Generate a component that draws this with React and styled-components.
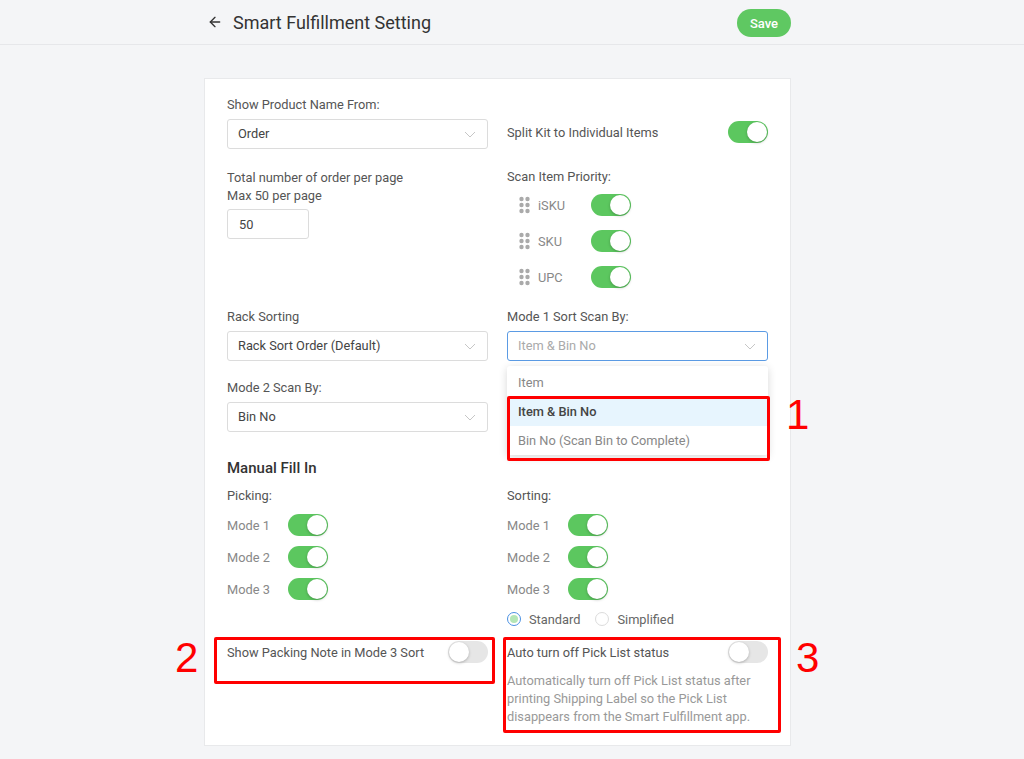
import React from 'react';
import styled, { createGlobalStyle } from 'styled-components';
import { ArrowLeft } from 'lucide-react';

const GlobalStyle = createGlobalStyle`
  html, body {
    margin: 0;
    padding: 0;
    background: #f4f5f7;
    font-family: Roboto, "Noto Sans", Arial, sans-serif;
    color: #555;
  }
  * { box-sizing: border-box; }
`;

const TEXT = '12.8px';

const Chevron = () => (
  <svg width="12" height="7" viewBox="0 0 12 7" fill="none">
    <path d="M1 1l5 5 5-5" stroke="#c6c6c6" strokeWidth="1" />
  </svg>
);

const Dots = () => (
  <svg width="11" height="18" viewBox="0 0 11 18">
    {[3, 9, 15].map(y => (
      <g key={y}>
        <circle cx="2.5" cy={y} r="2.2" fill="#aaa" />
        <circle cx="8.5" cy={y} r="2.2" fill="#aaa" />
      </g>
    ))}
  </svg>
);

function Select({ value, focused, children }) {
  return (
    <styles.SelectBox $focused={focused}>
      <styles.SelectValue $focused={focused}>{value}</styles.SelectValue>
      <Chevron />
      {children}
    </styles.SelectBox>
  );
}

function ModeList({ title }) {
  return (
    <div>
      <styles.Label>{title}</styles.Label>
      <styles.ToggleList>
        {['Mode 1', 'Mode 2', 'Mode 3'].map(m => (
          <styles.ModeRow key={m}>
            <styles.ModeLabel>{m}</styles.ModeLabel>
            <styles.Toggle $on />
          </styles.ModeRow>
        ))}
      </styles.ToggleList>
    </div>
  );
}

function App() {
  return (
    <>
      <GlobalStyle />
      <styles.Header>
        <styles.HeaderInner>
          <styles.TitleGroup>
            <ArrowLeft size={16} color="#333" strokeWidth={2} />
            <styles.Title>Smart Fulfillment Setting</styles.Title>
          </styles.TitleGroup>
          <styles.SaveButton>Save</styles.SaveButton>
        </styles.HeaderInner>
      </styles.Header>

      <styles.Card>
        <styles.Row>
          <div>
            <styles.Label>Show Product Name From:</styles.Label>
            <Select value="Order" />
          </div>
          <styles.InlineSetting $h={34}>
            <span>Split Kit to Individual Items</span>
            <styles.Toggle $on />
          </styles.InlineSetting>
        </styles.Row>

        <styles.Row $mt={20}>
          <div>
            <styles.Label $lh={18}>
              Total number of order per page
              <br />
              Max 50 per page
            </styles.Label>
            <styles.NumberInput>50</styles.NumberInput>
          </div>
          <div>
            <styles.Label>Scan Item Priority:</styles.Label>
            <styles.PriorityList>
              {['iSKU', 'SKU', 'UPC'].map(k => (
                <styles.PriorityItem key={k}>
                  <Dots />
                  <styles.PriorityLabel>{k}</styles.PriorityLabel>
                  <styles.Toggle $on />
                </styles.PriorityItem>
              ))}
            </styles.PriorityList>
          </div>
        </styles.Row>

        <styles.Row $mt={21}>
          <div>
            <styles.Label>Rack Sorting</styles.Label>
            <Select value="Rack Sort Order (Default)" />
          </div>
          <div>
            <styles.Label>Mode 1 Sort Scan By:</styles.Label>
            <Select value="Item &amp; Bin No" focused>
              <styles.Menu>
                <styles.MenuItem>Item</styles.MenuItem>
                <styles.MenuItem $active>Item &amp; Bin No</styles.MenuItem>
                <styles.MenuItem>Bin No (Scan Bin to Complete)</styles.MenuItem>
                <styles.MenuMark />
                <styles.MarkNumber $left={279} $top={28}>1</styles.MarkNumber>
              </styles.Menu>
            </Select>
          </div>
        </styles.Row>

        <styles.Row $mt={19}>
          <div>
            <styles.Label>Mode 2 Scan By:</styles.Label>
            <Select value="Bin No" />
          </div>
        </styles.Row>

        <styles.SectionTitle>Manual Fill In</styles.SectionTitle>

        <styles.Row $mt={11}>
          <ModeList title="Picking:" />
          <div>
            <ModeList title="Sorting:" />
            <styles.RadioGroup>
              <styles.RadioOption>
                <styles.Radio $checked />
                Standard
              </styles.RadioOption>
              <styles.RadioOption>
                <styles.Radio />
                Simplified
              </styles.RadioOption>
            </styles.RadioGroup>
          </div>
        </styles.Row>

        <styles.Row $mt={14}>
          <styles.Marked>
            <styles.InlineSetting $h={22}>
              <span>Show Packing Note in Mode 3 Sort</span>
              <styles.Toggle />
            </styles.InlineSetting>
            <styles.MarkBox $top={-4} $left={-13} $right={-7} $height={47} />
            <styles.MarkNumber $left={-52} $top={-4}>2</styles.MarkNumber>
          </styles.Marked>
          <styles.Marked>
            <styles.InlineSetting $h={22}>
              <span>Auto turn off Pick List status</span>
              <styles.Toggle />
            </styles.InlineSetting>
            <styles.Description>
              Automatically turn off Pick List status after printing Shipping Label so the Pick
              List disappears from the Smart Fulfillment app.
            </styles.Description>
            <styles.MarkBox $top={-4} $left={-4} $right={-13} $bottom={-7} />
            <styles.MarkNumber $left={289} $top={-4}>3</styles.MarkNumber>
          </styles.Marked>
        </styles.Row>
      </styles.Card>
    </>
  );
}

const styles = {};

styles.Header = styled.header`
  height: 45px;
  border-bottom: 1px solid #e6e7ea;
`;

styles.HeaderInner = styled.div`
  width: 587px;
  height: 44px;
  margin-left: 204px;
  display: flex;
  align-items: center;
  justify-content: space-between;
`;

styles.TitleGroup = styled.div`
  display: flex;
  align-items: center;
  gap: 10px;
  padding-left: 3px;
`;

styles.Title = styled.h1`
  margin: 0;
  font-size: 18px;
  font-weight: 400;
  color: #333;
`;

styles.SaveButton = styled.button`
  width: 54px;
  height: 28px;
  border: none;
  border-radius: 14px;
  background: #5fc862;
  color: #fff;
  font-family: inherit;
  font-size: 13px;
  font-weight: 500;
  margin-top: 2px;
`;

styles.Card = styled.main`
  width: 587px;
  margin: 33px 0 14px 204px;
  background: #fff;
  border: 1px solid #e8e9eb;
  padding: 18px 22px 19px 22px;
`;

styles.Row = styled.div`
  display: grid;
  grid-template-columns: 261px 261px;
  column-gap: 19px;
  margin-top: ${p => p.$mt || 0}px;
`;

styles.Label = styled.div`
  font-size: ${TEXT};
  line-height: ${p => p.$lh || 16}px;
  color: #555;
`;

styles.SelectBox = styled.div`
  position: relative;
  margin-top: 6px;
  height: 30px;
  border: 1px solid ${p => (p.$focused ? '#5b9be4' : '#dcdcdc')};
  border-radius: 3px;
  padding: 0 11px 0 10px;
  display: flex;
  align-items: center;
  justify-content: space-between;
`;

styles.SelectValue = styled.span`
  font-size: ${TEXT};
  line-height: 16px;
  margin-top: -1px;
  color: ${p => (p.$focused ? '#aaa' : '#444')};
`;

styles.Menu = styled.div`
  position: absolute;
  top: 34px;
  left: -1px;
  width: 261px;
  padding: 2px 0 0;
  background: #fff;
  border-radius: 3px;
  box-shadow: 0 2px 8px rgba(0, 0, 0, 0.16);
  z-index: 2;
`;

styles.MenuItem = styled.div`
  height: 29px;
  padding-left: 11px;
  display: flex;
  align-items: center;
  font-size: ${TEXT};
  color: ${p => (p.$active ? '#444' : '#888')};
  font-weight: ${p => (p.$active ? 500 : 400)};
  background: ${p => (p.$active ? '#e7f5fe' : 'transparent')};
`;

styles.MenuMark = styled.div`
  position: absolute;
  top: 30px;
  left: 0;
  right: -2px;
  bottom: -6px;
  border: 3px solid #f00;
  border-radius: 2px;
`;

styles.MarkBox = styled.div`
  position: absolute;
  top: ${p => p.$top}px;
  left: ${p => p.$left}px;
  right: ${p => p.$right}px;
  ${p => (p.$height ? `height: ${p.$height}px;` : `bottom: ${p.$bottom}px;`)}
  border: 3px solid #f00;
  border-radius: 2px;
  pointer-events: none;
`;

styles.MarkNumber = styled.div`
  position: absolute;
  top: ${p => p.$top}px;
  left: ${p => p.$left}px;
  font-family: "Liberation Sans", Arial, sans-serif;
  font-size: 42px;
  line-height: 42px;
  color: #f00;
`;

styles.Marked = styled.div`
  position: relative;
`;

styles.InlineSetting = styled.div`
  display: flex;
  align-items: center;
  justify-content: space-between;
  align-self: end;
  height: ${p => p.$h || 29}px;
  font-size: ${TEXT};
  color: #555;
`;

styles.Toggle = styled.span`
  position: relative;
  flex: none;
  width: 40px;
  height: 22px;
  border-radius: 11px;
  background: ${p => (p.$on ? '#5cc75f' : '#e6e6e6')};
  &::after {
    content: '';
    position: absolute;
    top: 1px;
    left: ${p => (p.$on ? '19px' : '1px')};
    width: 20px;
    height: 20px;
    border-radius: 50%;
    background: #fff;
    box-shadow: 0 1px 3px rgba(0, 0, 0, 0.25);
  }
`;

styles.NumberInput = styled.div`
  margin-top: 4px;
  width: 82px;
  height: 30px;
  border: 1px solid #dcdcdc;
  border-radius: 3px;
  padding-left: 11px;
  display: flex;
  align-items: center;
  font-size: ${TEXT};
  color: #444;
`;

styles.PriorityList = styled.div`
  margin-top: 9px;
  padding-left: 12px;
  display: flex;
  flex-direction: column;
  gap: 14px;
`;

styles.PriorityItem = styled.div`
  display: flex;
  align-items: center;
  height: 22px;
  svg {
    margin-right: 8px;
  }
`;

styles.PriorityLabel = styled.span`
  width: 53px;
  font-size: ${TEXT};
  color: #888;
`;

styles.SectionTitle = styled.h2`
  margin: 27px 0 0;
  font-size: 15px;
  line-height: 18px;
  font-weight: 500;
  color: #333;
`;

styles.ToggleList = styled.div`
  margin-top: 10px;
  display: flex;
  flex-direction: column;
  gap: 10px;
`;

styles.ModeRow = styled.div`
  display: flex;
  align-items: center;
  height: 22px;
`;

styles.ModeLabel = styled.span`
  width: 61px;
  font-size: ${TEXT};
  color: #888;
`;

styles.RadioGroup = styled.div`
  margin-top: 11px;
  display: flex;
  align-items: center;
  height: 16px;
`;

styles.RadioOption = styled.label`
  display: flex;
  align-items: center;
  gap: 8px;
  margin-right: 15px;
  font-size: ${TEXT};
  color: #666;
`;

styles.Radio = styled.span`
  width: 14px;
  height: 14px;
  border-radius: 50%;
  border: 1px solid ${p => (p.$checked ? '#4a90e2' : '#dcdcdc')};
  display: flex;
  align-items: center;
  justify-content: center;
  &::after {
    content: '';
    width: 8px;
    height: 8px;
    border-radius: 50%;
    background: ${p => (p.$checked ? '#b4e6b6' : 'transparent')};
  }
`;

styles.Description = styled.p`
  margin: 9px 0 0;
  font-size: ${TEXT};
  line-height: 18px;
  color: #999;
`;

export default App;
